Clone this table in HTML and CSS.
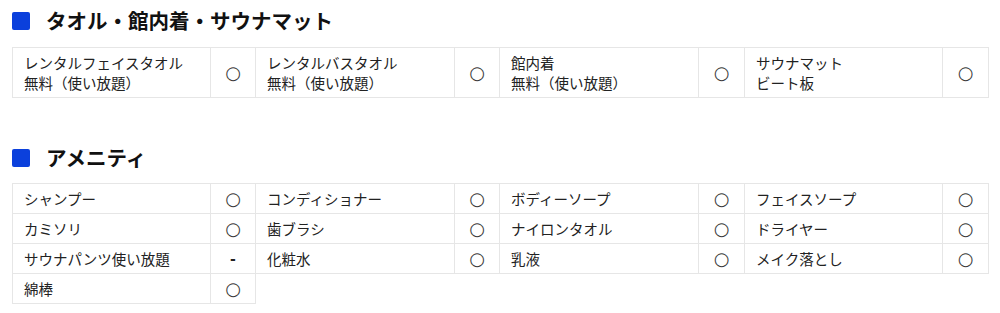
FILE: index.html
```html
<!DOCTYPE html>
<html lang="ja">
<head>
<meta charset="utf-8">
<title>設備</title>
<link rel="stylesheet" href="styles.css">
</head>
<body>
<section class="block">
  <h2 class="title"><span class="square"></span>タオル・館内着・サウナマット</h2>
  <div class="grid">
    <div class="name">レンタルフェイスタオル<br>無料（使い放題）</div><div class="mark">○</div>
    <div class="name">レンタルバスタオル<br>無料（使い放題）</div><div class="mark">○</div>
    <div class="name">館内着<br>無料（使い放題）</div><div class="mark">○</div>
    <div class="name">サウナマット<br>ビート板</div><div class="mark">○</div>
  </div>
</section>
<section class="block block-second">
  <h2 class="title"><span class="square"></span>アメニティ</h2>
  <div class="grid">
    <div class="name">シャンプー</div><div class="mark">○</div>
    <div class="name">コンディショナー</div><div class="mark">○</div>
    <div class="name">ボディーソープ</div><div class="mark">○</div>
    <div class="name">フェイスソープ</div><div class="mark">○</div>
    <div class="name">カミソリ</div><div class="mark">○</div>
    <div class="name">歯ブラシ</div><div class="mark">○</div>
    <div class="name">ナイロンタオル</div><div class="mark">○</div>
    <div class="name">ドライヤー</div><div class="mark">○</div>
    <div class="name">サウナパンツ使い放題</div><div class="mark dash">-</div>
    <div class="name">化粧水</div><div class="mark">○</div>
    <div class="name">乳液</div><div class="mark">○</div>
    <div class="name">メイク落とし</div><div class="mark">○</div>
    <div class="name">綿棒</div><div class="mark">○</div>
  </div>
</section>
</body>
</html>
```
FILE: styles.css
```css
html, body {
  margin: 0;
  padding: 0;
  background: #fff;
}
body {
  padding: 8px 11px 0 12px;
  font-family: "Noto Sans CJK JP", "Noto Sans", sans-serif;
  color: #222;
}
.block-second {
  margin-top: 47px;
}
.title {
  display: flex;
  align-items: center;
  gap: 16px;
  margin: 0 0 14px 0;
  font-size: 20.5px;
  line-height: 25px;
  font-weight: 700;
  color: #111;
}
.block-second .title {
  margin-bottom: 13px;
}
.square {
  width: 18px;
  height: 18px;
  border-radius: 2px;
  background: #0b40dc;
  flex: none;
}
.grid {
  display: grid;
  grid-template-columns: 198px 45px 199px 45px 199px 46px 198px 46px;
  border-top: 1px solid #e6e6e6;
  border-left: 1px solid #e6e6e6;
}
.name, .mark {
  border-right: 1px solid #e6e6e6;
  border-bottom: 1px solid #e6e6e6;
  padding: 5px 11px 4px 11px;
  font-size: 14.5px;
  line-height: 20px;
  display: flex;
  flex-direction: column;
  justify-content: center;
}
.mark {
  padding: 5px 0 4px 0;
  align-items: center;
  font-size: 18px;
  color: #3a3a3a;
  font-family: "DejaVu Sans", sans-serif;
}
.dash {
  font-weight: 700;
  font-size: 14px;
  color: #222;
}
```
